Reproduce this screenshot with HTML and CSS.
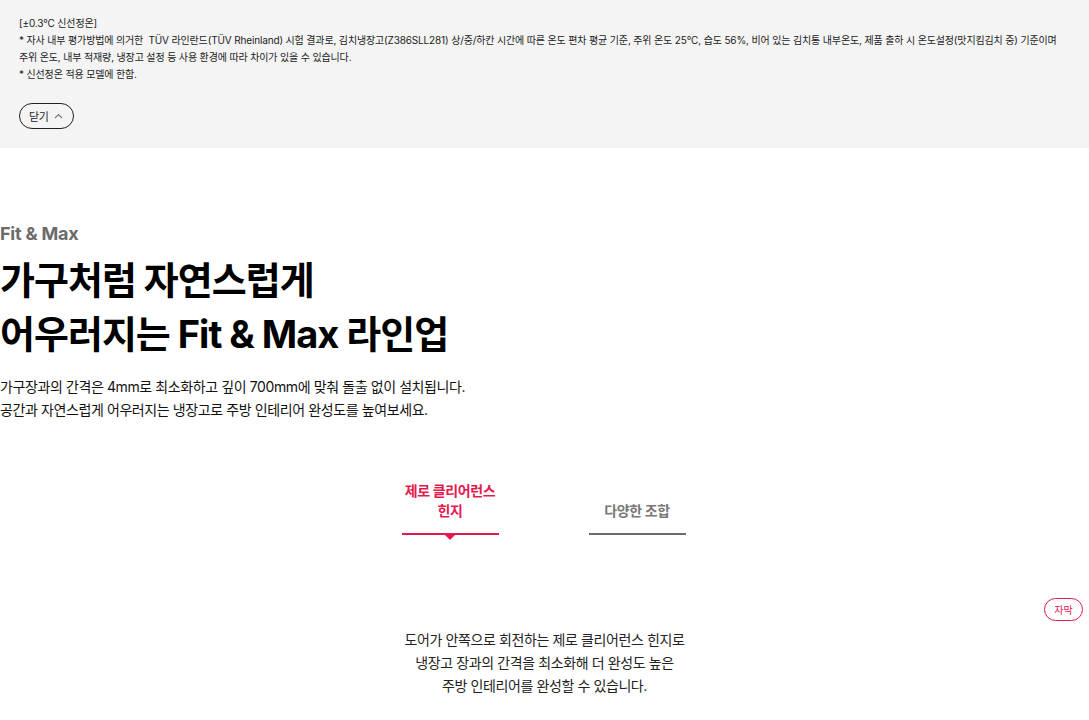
FILE: index.html
```html
<!DOCTYPE html>
<html lang="ko">

<head>
    <meta charset="UTF-8">
    <meta name="viewport" content="width=device-width, initial-scale=1.0">
    <title>Fit &amp; Max</title>
    <link rel="stylesheet" href="styles.css">
</head>

<body>
    <section class="notice">
        <p>[±0.3°C 신선정온]</p>
        <p>* 자사 내부 평가방법에 의거한&nbsp; TÜV 라인란드(TÜV Rheinland) 시험 결과로, 김치냉장고(Z386SLL281) 상/중/하칸 시간에 따른 온도 편차 평균 기준, 주위 온도 25°C, 습도 56%, 비어 있는 김치통 내부온도, 제품 출하 시 온도설정(맛지킴김치 중) 기준이며<br>주위 온도, 내부 적재량, 냉장고 설정 등 사용 환경에 따라 차이가 있을 수 있습니다.</p>
        <p>* 신선정온 적용 모델에 한함.</p>
        <button class="close-btn" type="button">닫기
            <svg width="9" height="6" viewBox="0 0 9 6"><path d="M1 5 L4.5 1.5 L8 5" fill="none" stroke="#777" stroke-width="1.1"/></svg>
        </button>
    </section>

    <main>
        <section class="intro">
            <h3>Fit &amp; Max</h3>
            <h2>가구처럼 자연스럽게<br>어우러지는 Fit &amp; Max 라인업</h2>
            <p>가구장과의 간격은 4mm로 최소화하고 깊이 700mm에 맞춰 돌출 없이 설치됩니다.<br>공간과 자연스럽게 어우러지는 냉장고로 주방 인테리어 완성도를 높여보세요.</p>
        </section>

        <nav class="tabs">
            <button class="tab active" type="button">제로 클리어런스<br>힌지</button>
            <button class="tab" type="button">다양한 조합</button>
        </nav>

        <section class="detail">
            <div class="caption-row">
                <button class="caption-btn" type="button">자막</button>
            </div>
            <p>도어가 안쪽으로 회전하는 제로 클리어런스 힌지로<br>냉장고 장과의 간격을 최소화해 더 완성도 높은<br>주방 인테리어를 완성할 수 있습니다.</p>
        </section>
    </main>
</body>

</html>
```

FILE: styles.css
```css
* {
    box-sizing: border-box;
}

body {
    margin: 0;
    font-family: Inter, "Noto Sans CJK KR", sans-serif;
    color: #111;
    background-color: #fff;
}

.notice {
    background-color: #f4f4f4;
    padding: 15px 19px 18px;
    height: 148px;
}

.notice p {
    margin: 0;
    font-size: 10px;
    line-height: 17px;
    letter-spacing: -0.15px;
    white-space: nowrap;
    color: #222;
}

.close-btn {
    display: flex;
    align-items: center;
    gap: 5px;
    margin-top: 20px;
    height: 26px;
    padding: 0 10px 0 9px;
    border: 1px solid #222;
    border-radius: 13px;
    background: transparent;
    font-family: inherit;
    font-size: 11px;
    letter-spacing: -0.3px;
    color: #222;
}

.intro {
    padding-top: 74px;
}

.intro h3 {
    margin: 0;
    font-size: 18px;
    line-height: 24px;
    font-weight: 700;
    letter-spacing: -0.2px;
    color: #6b6b6b;
}

.intro h2 {
    margin: 7px 0 0;
    font-size: 38px;
    line-height: 54px;
    font-weight: 700;
    letter-spacing: -1px;
    color: #000;
}

.intro p {
    margin: 14px 0 0;
    font-size: 14px;
    line-height: 23px;
    letter-spacing: -0.4px;
    color: #111;
}

.tabs {
    display: flex;
    justify-content: center;
    gap: 90px;
    margin-top: 57px;
    padding-right: 2px;
}

.tab {
    position: relative;
    width: 97px;
    height: 57px;
    padding: 0 0 12px;
    display: flex;
    align-items: flex-end;
    justify-content: center;
    border: none;
    border-bottom: 2px solid #6b6b6b;
    background: none;
    font-family: inherit;
    font-size: 14px;
    line-height: 20px;
    font-weight: 700;
    letter-spacing: -0.4px;
    color: #777;
}

.tab.active {
    color: #e6194f;
    border-bottom-color: #e6194f;
}

.tab.active::after {
    content: "";
    position: absolute;
    left: 50%;
    bottom: -7px;
    margin-left: -5px;
    border-left: 5px solid transparent;
    border-right: 5px solid transparent;
    border-top: 5px solid #e6194f;
}

.detail {
    margin-top: 63px;
    text-align: center;
}

.caption-row {
    display: flex;
    justify-content: flex-end;
    padding-right: 6px;
}

.caption-btn {
    width: 39px;
    height: 23px;
    border: 1px solid #e6194f;
    border-radius: 12px;
    background: #fff;
    font-family: inherit;
    font-size: 10px;
    color: #e6194f;
}

.detail p {
    margin: 7px 0 0;
    font-size: 14px;
    line-height: 23px;
    letter-spacing: -0.4px;
    color: #222;
}
```
